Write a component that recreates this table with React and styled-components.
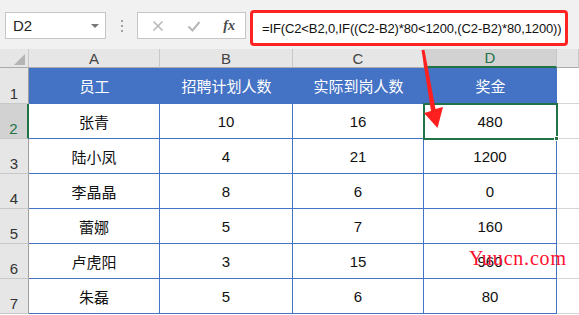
import styled, { createGlobalStyle } from "styled-components";

const GlobalStyle = createGlobalStyle`
  * {
    box-sizing: border-box;
  }

  body {
    margin: 0;
    background: #ffffff;
    font-family: "Liberation Sans", "Noto Sans CJK SC", sans-serif;
  }
`;

const BLUE = "#4472c4";
const GREEN = "#217346";

const columns = ["A", "B", "C", "D"];
const headers = ["员工", "招聘计划人数", "实际到岗人数", "奖金"];
const rows = [
  ["张青", "10", "16", "480"],
  ["陆小凤", "4", "21", "1200"],
  ["李晶晶", "8", "6", "0"],
  ["蕾娜", "5", "7", "160"],
  ["卢虎阳", "3", "15", "960"],
  ["朱磊", "5", "6", "80"],
];
const formula = "=IF(C2<B2,0,IF((C2-B2)*80<1200,(C2-B2)*80,1200))";

export default function App() {
  return (
    <>
      <GlobalStyle />
      <Page>
        <FormulaBar>
          <NameBox>
            <span>D2</span>
            <Caret />
          </NameBox>
          <Grip>
            <i />
            <i />
            <i />
          </Grip>
          <FxBox>
            <svg width="12" height="12" viewBox="0 0 12 12">
              <path d="M1.5 1.5 L10.5 10.5 M10.5 1.5 L1.5 10.5" stroke="#b8b8b8" strokeWidth="1.6" fill="none" />
            </svg>
            <svg width="14" height="12" viewBox="0 0 14 12">
              <path d="M1.5 6.5 L5.5 10.5 L12.5 2" stroke="#b8b8b8" strokeWidth="2" fill="none" />
            </svg>
            <Fx>fx</Fx>
          </FxBox>
          <FormulaInput>{formula}</FormulaInput>
        </FormulaBar>

        <Sheet>
          <Corner>
            <Triangle />
          </Corner>
          {columns.map((c) => (
            <ColHeader key={c} selected={c === "D"}>
              {c}
            </ColHeader>
          ))}
          <ColHeader />

          <RowHeader>1</RowHeader>
          {headers.map((h) => (
            <HeadCell key={h}>{h}</HeadCell>
          ))}
          <BlankCell />

          {rows.map((row, i) => (
            <Row key={i} number={i + 2} cells={row} />
          ))}
        </Sheet>

        <Arrow width="579" height="315" viewBox="0 0 579 315">
          <polygon points="421.5,50 424.5,50 435.5,109 443,107 437.5,128 424,113 431,111" fill="#ff1f1f" />
        </Arrow>
        <Watermark>Yuucn.com</Watermark>
      </Page>
    </>
  );
}

function Row({ number, cells }) {
  const active = number === 2;
  return (
    <>
      <RowHeader selected={active}>{number}</RowHeader>
      {cells.map((value, j) => (
        <Cell key={j} active={active && j === 3}>
          {value}
          {active && j === 3 ? <FillHandle /> : null}
        </Cell>
      ))}
      <BlankCell />
    </>
  );
}

const Page = styled.div`
  position: relative;
  width: 579px;
  height: 315px;
  overflow: hidden;
  background: #ffffff;
`;

const FormulaBar = styled.div`
  height: 49px;
  background: #f1f1f1;

  display: flex;
  align-items: flex-start;

  padding: 12px 0 0 5px;
`;

const NameBox = styled.div`
  width: 101px;
  height: 27px;

  background: #ffffff;
  border: 1px solid #c6c6c6;

  display: flex;
  align-items: center;
  justify-content: space-between;

  padding: 0 6px 0 7px;

  font-size: 15px;
  color: #222222;
`;

const Caret = styled.div`
  width: 0;
  height: 0;
  border-left: 4px solid transparent;
  border-right: 4px solid transparent;
  border-top: 4px solid #777777;
`;

const Grip = styled.div`
  width: 31px;
  height: 27px;

  display: flex;
  flex-direction: column;
  align-items: center;
  justify-content: center;
  gap: 3px;

  > i {
    width: 2px;
    height: 2px;
    background: #a0a0a0;
  }
`;

const FxBox = styled.div`
  width: 109px;
  height: 27px;

  background: #ffffff;
  border: 1px solid #c6c6c6;

  display: flex;
  align-items: center;
  justify-content: space-between;

  padding: 0 10px 0 14px;
`;

const Fx = styled.span`
  font-family: "Liberation Serif", serif;
  font-style: italic;
  font-weight: bold;
  font-size: 14px;
  color: #4a4a4a;
`;

const FormulaInput = styled.div`
  width: 318px;
  height: 36px;
  margin: -2px 0 0 4px;

  background: #ffffff;
  border: 3px solid #ff2424;
  border-radius: 4px;

  display: flex;
  align-items: center;

  padding-left: 9px;

  font-size: 13px;
  letter-spacing: -0.12px;
  color: #111111;
  white-space: nowrap;
  overflow: hidden;
`;

const Sheet = styled.div`
  display: grid;
  grid-template-columns: 29px 131px 133px 131px 133px 22px;
  grid-template-rows: 19px 36px repeat(6, 35px);
`;

const Corner = styled.div`
  background: #e6e6e6;
  border-right: 1px solid #c8c8c8;
  border-bottom: 1px solid #ababab;

  display: flex;
  align-items: flex-end;
  justify-content: flex-end;

  padding: 0 3px 2px 0;
`;

const Triangle = styled.div`
  width: 0;
  height: 0;
  border-left: 11px solid transparent;
  border-bottom: 11px solid #b4b4b4;
`;

const ColHeader = styled.div`
  background: ${(props) => (props.selected ? "#d2d2d2" : "#e6e6e6")};
  color: ${(props) => (props.selected ? GREEN : "#444444")};
  border-right: 1px solid #c8c8c8;
  border-bottom: ${(props) => (props.selected ? `2px solid ${GREEN}` : "1px solid #ababab")};

  display: flex;
  align-items: center;
  justify-content: center;

  font-size: 15px;
  line-height: 1;
`;

const RowHeader = styled.div`
  background: ${(props) => (props.selected ? "#d2d2d2" : "#e6e6e6")};
  color: ${(props) => (props.selected ? GREEN : "#333333")};
  border-bottom: 1px solid #c8c8c8;
  border-right: ${(props) => (props.selected ? `2px solid ${GREEN}` : "1px solid #9e9e9e")};

  display: flex;
  align-items: flex-end;
  justify-content: center;

  padding-bottom: 1px;
  font-size: 15px;
  line-height: 1.1;
`;

const HeadCell = styled.div`
  background: ${BLUE};
  color: #ffffff;
  border-bottom: 1px solid ${BLUE};

  display: flex;
  align-items: center;
  justify-content: center;

  font-size: 15px;
`;

const Cell = styled.div`
  position: relative;
  background: #ffffff;
  color: #111111;
  border-right: 1px solid ${BLUE};
  border-bottom: 1px solid ${BLUE};
  outline: ${(props) => (props.active ? `2px solid ${GREEN}` : "none")};
  outline-offset: -1px;
  z-index: ${(props) => (props.active ? 1 : 0)};

  display: flex;
  align-items: center;
  justify-content: center;

  font-size: 15px;
`;

const FillHandle = styled.span`
  position: absolute;
  right: -3px;
  bottom: -3px;
  width: 5px;
  height: 5px;
  background: ${GREEN};
  border: 1px solid #ffffff;
`;

const BlankCell = styled.div`
  background: #ffffff;
  border-bottom: 1px solid #d6d6d6;
`;

const Arrow = styled.svg`
  position: absolute;
  top: 0;
  left: 0;
  z-index: 2;
  pointer-events: none;
`;

const Watermark = styled.div`
  position: absolute;
  left: 469px;
  top: 247px;
  z-index: 2;

  font-family: "Liberation Serif", serif;
  font-size: 20px;
  letter-spacing: 0.8px;
  color: #ff1030;
  pointer-events: none;
`;
